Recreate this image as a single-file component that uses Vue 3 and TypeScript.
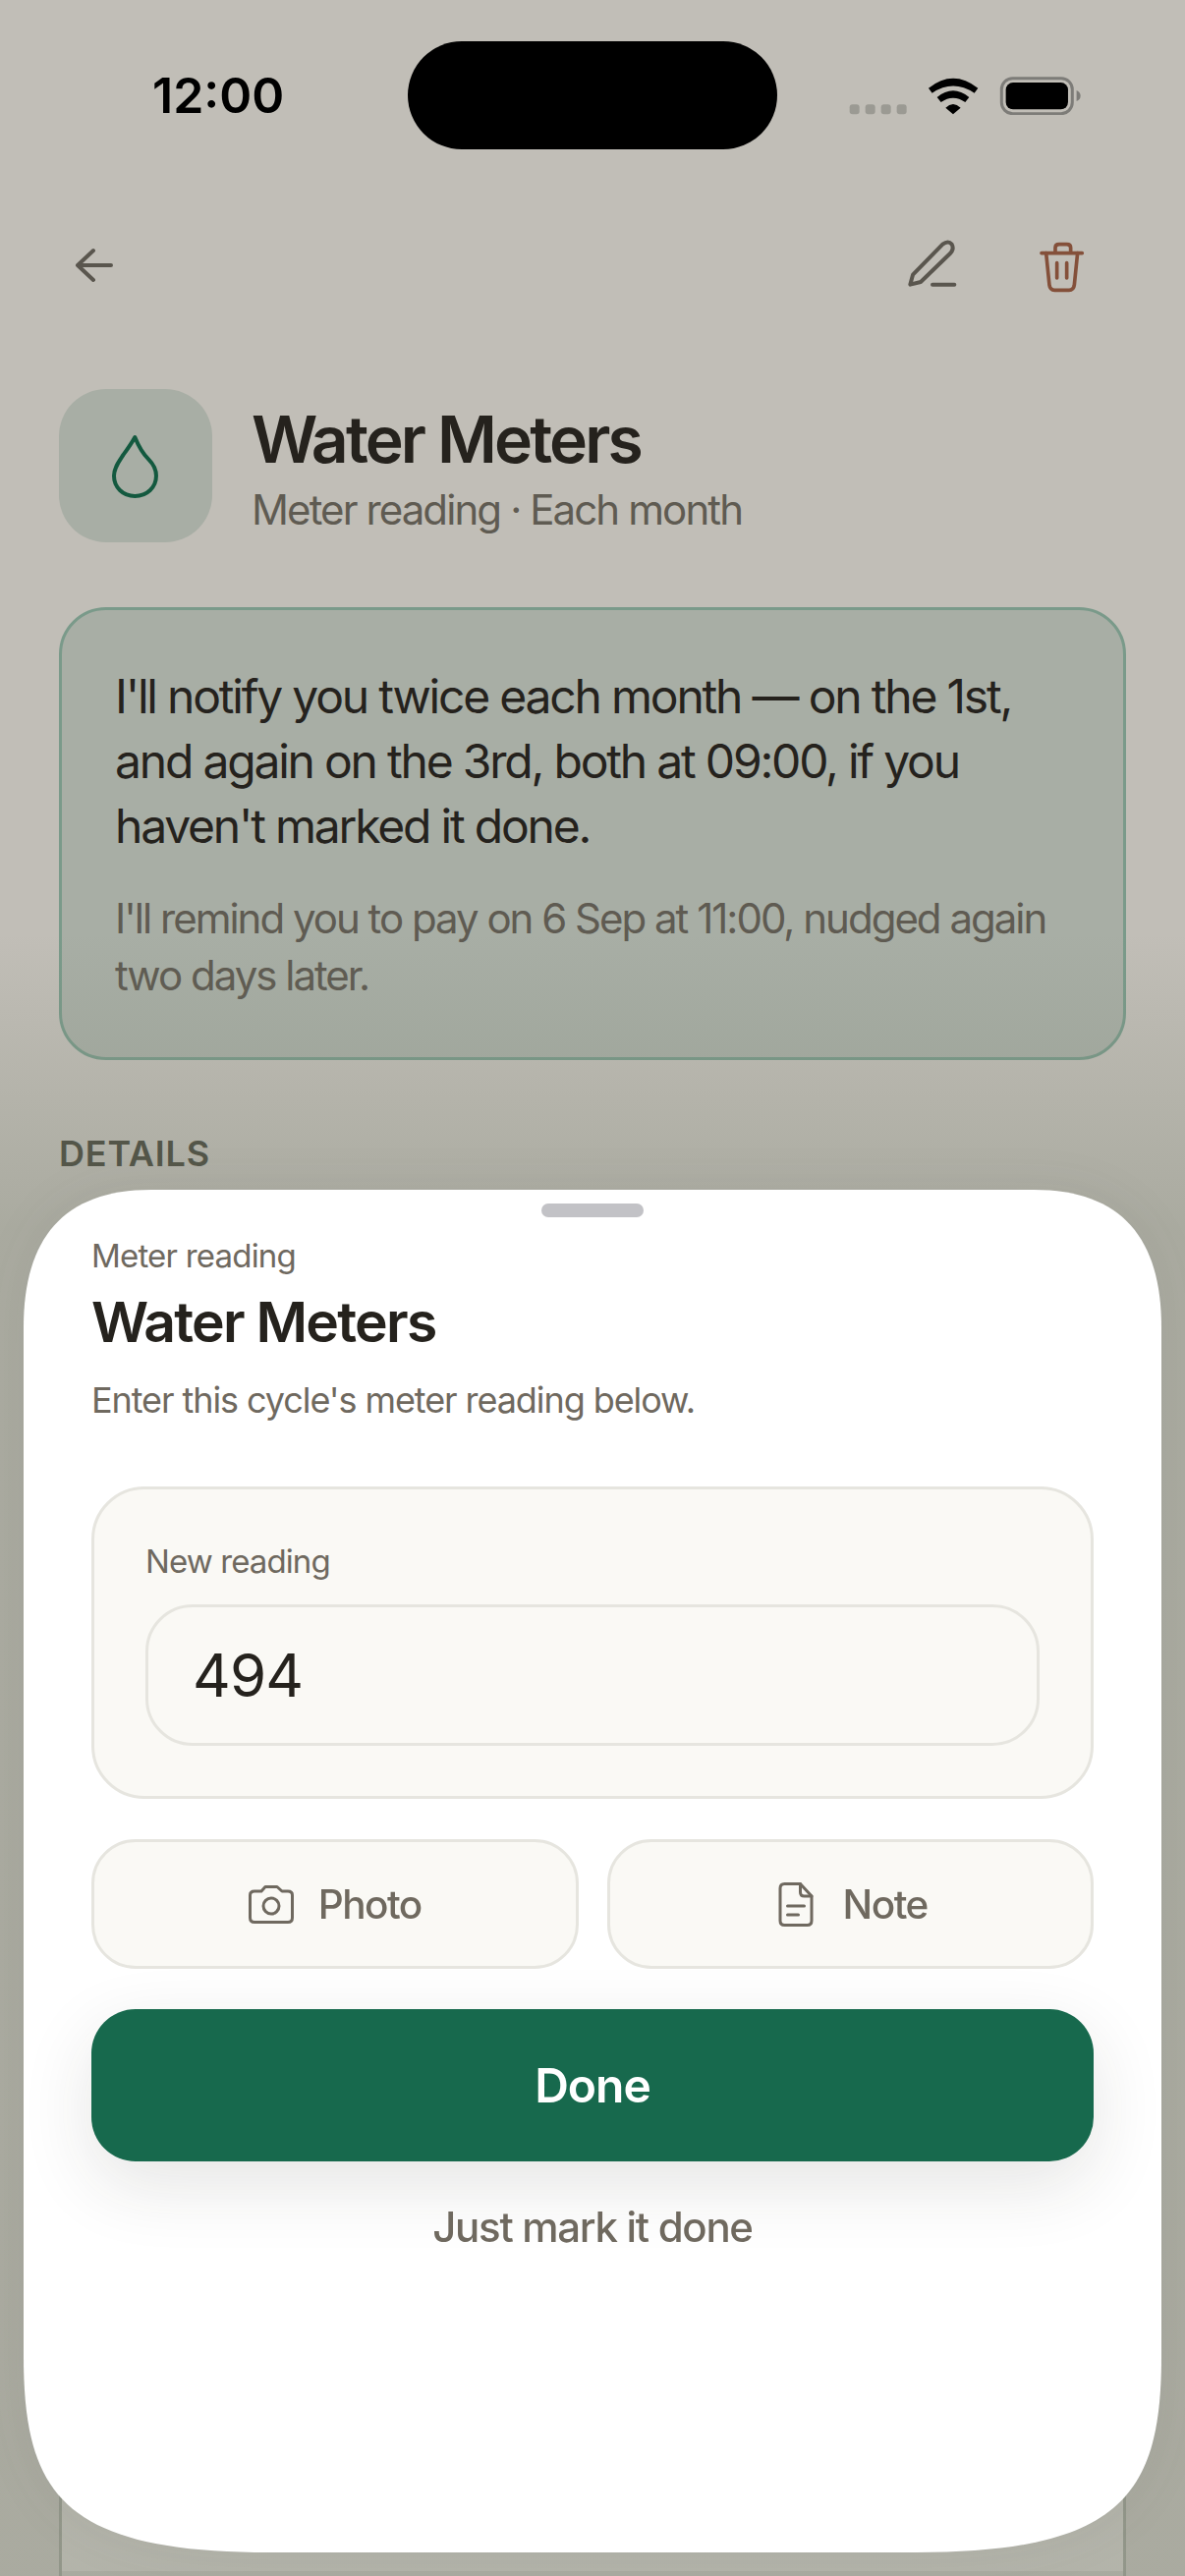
<script setup lang="ts">
const sheetClip =
  "path('M0 140C0 50 40 0 130 0H1028C1118 0 1158 50 1158 140V1187C1158 1327 1118 1387 908 1387H250C40 1387 0 1327 0 1187Z')"
</script>

<template>
  <div class="screen">
    <header class="status">
      <span class="time">12:00</span>
      <svg class="status-icons" viewBox="70 80 715 120" width="238.3" height="40">
        <rect x="75" y="168" width="30" height="30" rx="9" fill="#9b9a93" />
        <rect x="123" y="168" width="30" height="30" rx="9" fill="#9b9a93" />
        <rect x="171" y="168" width="30" height="30" rx="9" fill="#9b9a93" />
        <rect x="219" y="168" width="30" height="30" rx="9" fill="#9b9a93" />
        <path d="M316 118Q391 58 467 118L456 133Q391 90 327 133Z" fill="#000" />
        <path d="M342 146Q391 106 440 146L428 161Q391 135 354 161Z" fill="#000" />
        <path d="M368 178Q391 156 414 178L391 198Z" fill="#000" />
        <rect x="539" y="88" width="216" height="108" rx="34" fill="none" stroke="#7d7c78" stroke-width="9" />
        <rect x="552" y="101" width="190" height="82" rx="22" fill="#000" />
        <path d="M768 125Q780 130 780 142Q780 153 768 158Z" fill="#7d7c78" />
      </svg>
    </header>
    <div class="island"></div>

    <nav class="toolbar">
      <svg viewBox="0 0 44 44" width="44" height="44" fill="none" stroke="#5a564e" stroke-width="4" stroke-linecap="round" stroke-linejoin="round">
        <path d="M21 7L5 22L21 37M5 22H39" />
      </svg>
      <div class="toolbar-right">
        <svg viewBox="240 580 165 160" width="55" height="53.3" fill="none" stroke="#5a564e" stroke-width="12" stroke-linecap="round" stroke-linejoin="round">
          <path d="M256 720L264 690L355 597Q372 584 383 597Q391 612 378 625L288 712Z" />
          <path d="M324 720H391" />
        </svg>
        <svg viewBox="640 575 160 170" width="53.3" height="56.7" fill="none" stroke="#84503a" stroke-width="11" stroke-linecap="round" stroke-linejoin="round">
          <path d="M658 622H782M700 622V606Q700 595 712 595H735Q747 595 747 606V622" />
          <path d="M672 622L682 720Q684 735 698 735H742Q756 735 758 720L768 622" />
          <path d="M705 652V698M735 652V698" />
        </svg>
      </div>
    </nav>

    <section class="hero">
      <div class="tile">
        <svg viewBox="220 630 148 200" width="49.3" height="66.7" fill="none" stroke="#13593f" stroke-width="12" stroke-linejoin="round">
          <path d="M293 642C305 672 315 690 335 710C350 725 358 742 358 760C358 795 330 822 293 822C256 822 229 795 229 760C229 735 245 715 258 695C272 676 283 660 293 642Z" />
        </svg>
      </div>
      <div class="hero-text">
        <h1 class="hero-title">Water Meters</h1>
        <p class="hero-sub">Meter reading · Each month</p>
      </div>
    </section>

    <section class="callout">
      <p class="callout-main">I'll notify you twice each month — on the 1st, and again on the 3rd, both at 09:00, if you haven't marked it done.</p>
      <p class="callout-sub">I'll remind you to pay on 6 Sep at 11:00, nudged again two days later.</p>
    </section>

    <h2 class="section-label">DETAILS</h2>
    <div class="details-card">
      <div class="details-row"></div>
      <div class="details-row"></div>
    </div>

    <div class="scrim"></div>

    <div class="sheet-shadow">
      <div class="sheet" :style="{ clipPath: sheetClip }">
        <div class="handle"></div>
        <p class="eyebrow">Meter reading</p>
        <h2 class="sheet-title">Water Meters</h2>
        <p class="sheet-sub">Enter this cycle's meter reading below.</p>

        <div class="field">
          <label class="field-label">New reading</label>
          <div class="input">494</div>
        </div>

        <div class="actions">
          <button class="action">
            <svg viewBox="0 0 46 39" width="46" height="39" fill="none" stroke="#6f695f" stroke-width="3" stroke-linejoin="round">
              <path d="M6 6H13L17 1.5H29L34 6H40Q44.5 6 44.5 10V33Q44.5 37.5 40 37.5H6Q1.5 37.5 1.5 33V10Q1.5 6 6 6Z" />
              <circle cx="23" cy="21" r="8" />
            </svg>
            Photo
          </button>
          <button class="action">
            <svg viewBox="-5.5 0 46 45" width="46" height="45" fill="none" stroke="#6f695f" stroke-width="3" stroke-linecap="round" stroke-linejoin="round">
              <path d="M6 1.5H22L33.5 14V39Q33.5 43.5 29 43.5H6Q1.5 43.5 1.5 39V6Q1.5 1.5 6 1.5Z" />
              <path d="M22 1.5V10Q22 14 26 14H33.5M9 24H26M9 33H20" />
            </svg>
            Note
          </button>
        </div>

        <button class="done">Done</button>
        <p class="link">Just mark it done</p>
      </div>
    </div>
  </div>
</template>

<style scoped>
.screen {
  position: relative;
  width: 1206px;
  height: 2622px;
  overflow: hidden;
  background: #c1beb7;
  font-family: Inter, "Noto Sans", sans-serif;
  color: #25221d;
}

p,
h1,
h2 {
  margin: 0;
}

.status {
  height: 194px;
  padding: 0 105px 0 155px;
  box-sizing: border-box;
  display: flex;
  align-items: center;
  justify-content: space-between;
}

.time {
  font-size: 50px;
  font-weight: 600;
  color: #000;
}

.island {
  position: absolute;
  left: 415px;
  top: 42px;
  width: 376px;
  height: 110px;
  border-radius: 55px;
  background: #000;
}

.toolbar {
  height: 152px;
  padding: 0 99px 0 74px;
  box-sizing: border-box;
  display: flex;
  align-items: center;
  justify-content: space-between;
}

.toolbar-right {
  display: flex;
  align-items: center;
  gap: 78px;
}

.hero {
  margin: 50px 60px 0;
  display: flex;
  align-items: center;
  gap: 40px;
}

.tile {
  width: 156px;
  height: 156px;
  border-radius: 48px;
  background: #a8aea5;
  display: flex;
  align-items: center;
  justify-content: center;
}

.hero-text {
  padding-top: 6px;
}

.hero-title {
  font-size: 66px;
  line-height: 80px;
  font-weight: 600;
  letter-spacing: -2.85px;
}

.hero-sub {
  margin-top: 4px;
  font-size: 42px;
  line-height: 56px;
  color: #5f5b52;
  letter-spacing: -1.9px;
}

.callout {
  margin: 66px 60px 0;
  padding: 55px 54px 54px;
  border: 3px solid #7a9a8a;
  border-radius: 48px;
  background: #a8aea5;
}

.callout-main {
  font-size: 48px;
  line-height: 66px;
  letter-spacing: -2.2px;
}

.callout-sub {
  margin-top: 32px;
  font-size: 42px;
  line-height: 58px;
  color: #5f5b52;
  letter-spacing: -2px;
}

.section-label {
  margin: 73px 60px 0;
  font-size: 36px;
  line-height: 44px;
  font-weight: 600;
  color: #4d4d42;
  letter-spacing: 0.8px;
}

.details-card {
  margin: 30px 60px 0;
  border: 3px solid #a0a298;
  border-radius: 48px;
  background: #cecbc5;
}

.details-row {
  height: 1388px;
  border-bottom: 6px solid #c0beb7;
}

.scrim {
  position: absolute;
  inset: 0;
  background: linear-gradient(
    to bottom,
    rgba(110, 120, 100, 0) 0,
    rgba(110, 120, 100, 0) 950px,
    rgba(110, 120, 100, 0.28) 1250px,
    rgba(110, 120, 100, 0.28) 100%
  );
}

.sheet-shadow {
  position: absolute;
  left: 24px;
  top: 1211px;
  width: 1158px;
  height: 1387px;
  filter: drop-shadow(0 0 24px rgba(60, 60, 50, 0.07));
}

.sheet {
  height: 100%;
  padding: 14px 69px 0;
  box-sizing: border-box;
  background: #fff;
}

.handle {
  width: 104px;
  height: 14px;
  margin: 0 auto;
  border-radius: 7px;
  background: #c2c2c6;
}

.eyebrow {
  margin-top: 17px;
  font-size: 33px;
  line-height: 44px;
  color: #6f695f;
  letter-spacing: -0.8px;
}

.sheet-title {
  margin-top: 11px;
  font-size: 57px;
  line-height: 70px;
  font-weight: 600;
  letter-spacing: -1.75px;
}

.sheet-sub {
  margin-top: 19px;
  font-size: 36px;
  line-height: 50px;
  color: #6f695f;
  letter-spacing: -1.08px;
}

.field {
  margin-top: 63px;
  padding: 51px 52px 51px;
  border: 3px solid #e6e5df;
  border-radius: 54px;
  background: #faf9f5;
}

.field-label {
  display: block;
  font-size: 33px;
  line-height: 44px;
  color: #6f695f;
  letter-spacing: -0.9px;
}

.input {
  margin-top: 22px;
  height: 144px;
  padding-left: 45px;
  box-sizing: border-box;
  display: flex;
  align-items: center;
  border: 3px solid #e6e5df;
  border-radius: 48px;
  font-size: 60px;
  letter-spacing: -0.8px;
}

.actions {
  margin-top: 41px;
  display: grid;
  grid-template-columns: 1fr 1fr;
  gap: 29px;
}

.action {
  height: 132px;
  display: flex;
  align-items: center;
  justify-content: center;
  gap: 25px;
  border: 3px solid #e6e5df;
  border-radius: 45px;
  background: #faf9f5;
  font-family: inherit;
  font-size: 40.5px;
  font-weight: 500;
  color: #6f695f;
  letter-spacing: -1.5px;
}

.done {
  display: block;
  width: 100%;
  height: 155px;
  margin-top: 41px;
  border: none;
  border-radius: 45px;
  background: #17694d;
  box-shadow: 0 24px 72px rgba(40, 40, 30, 0.12);
  font-family: inherit;
  font-size: 48px;
  font-weight: 600;
  color: #fff;
  letter-spacing: -1px;
}

.link {
  margin-top: 39px;
  font-size: 42px;
  line-height: 56px;
  font-weight: 500;
  text-align: center;
  color: #6f695f;
  letter-spacing: -1.3px;
}
</style>
